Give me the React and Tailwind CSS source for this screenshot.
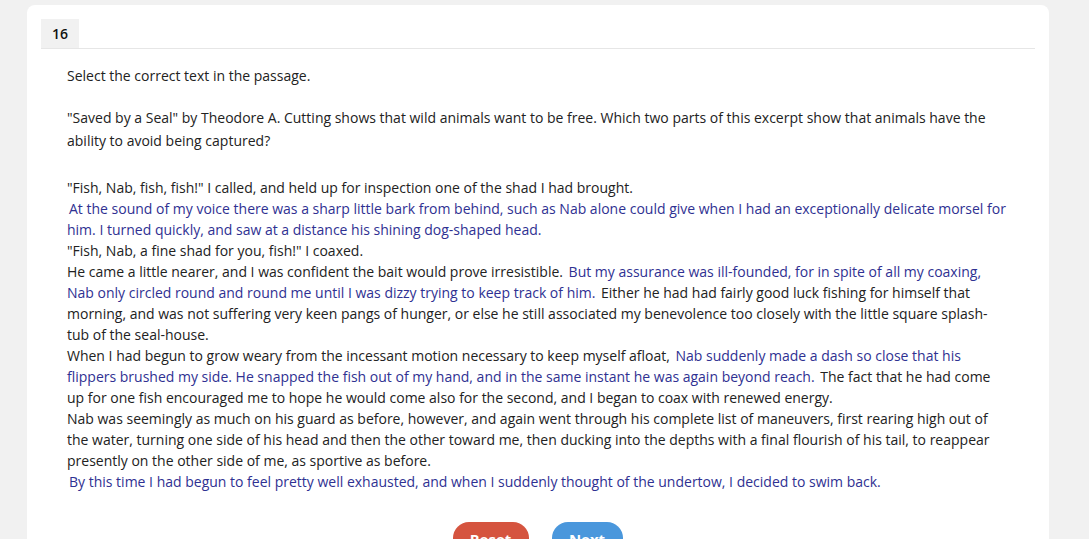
export default function App() {
  const blue = "px-[2px] text-[#2f3192]";
  return (
    <div className="min-h-[539px] bg-[#f1f1f1] pl-[27px] pr-[40px] pt-[5px] font-['Open_Sans',sans-serif] text-[14px] text-[#222]">
      <div className="w-[1022px] rounded-lg bg-white pt-[14px] pb-10">
        <div className="mx-[14px] flex border-b border-[#e6e6e6]">
          <div className="flex h-[29px] items-center bg-[#f1f1f1] px-[11px] font-semibold text-[#111]">16</div>
        </div>
        <div className="pl-[40px] pr-[41px]">
          <p className="mt-[16px] leading-[21px]">Select the correct text in the passage.</p>
          <p className="mt-[20px] leading-[23px]">
            "Saved by a Seal" by Theodore A. Cutting shows that wild animals want to be free. Which two parts of this excerpt show that animals have the ability to avoid being captured?
          </p>
          <div className="mt-[25px] leading-[21px]">
            "Fish, Nab, fish, fish!" I called, and held up for inspection one of the shad I had brought.
            <br />
            <span className={blue}>At the sound of my voice there was a sharp little bark from behind, such as Nab alone could give when I had an exceptionally delicate morsel for him. I turned quickly, and saw at a distance his shining dog-shaped head.</span>
            <br />
            "Fish, Nab, a fine shad for you, fish!" I coaxed.
            <br />
            He came a little nearer, and I was confident the bait would prove irresistible.{" "}
            <span className={blue}>But my assurance was ill-founded, for in spite of all my coaxing, Nab only circled round and round me until I was dizzy trying to keep track of him.</span>{" "}
            Either he had had fairly good luck fishing for himself that morning, and was not suffering very keen pangs of hunger, or else he still associated my benevolence too closely with the little square splash-tub of the seal-house.
            <br />
            When I had begun to grow weary from the incessant motion necessary to keep myself afloat,{" "}
            <span className={blue}>Nab suddenly made a dash so close that his flippers brushed my side. He snapped the fish out of my hand, and in the same instant he was again beyond reach.</span>{" "}
            The fact that he had come up for one fish encouraged me to hope he would come also for the second, and I began to coax with renewed energy.
            <br />
            Nab was seemingly as much on his guard as before, however, and again went through his complete list of maneuvers, first rearing high out of the water, turning one side of his head and then the other toward me, then ducking into the depths with a final flourish of his tail, to reappear presently on the other side of me, as sportive as before.
            <br />
            <span className={blue}>By this time I had begun to feel pretty well exhausted, and when I suddenly thought of the undertow, I decided to swim back.</span>
          </div>
          <div className="mt-[30px] flex justify-center gap-[23px]">
            <button className="h-[34px] w-[76px] rounded-[16px] bg-[#d5543f] text-[15px] font-bold text-white">Reset</button>
            <button className="h-[34px] w-[71px] rounded-[16px] bg-[#4a97dc] text-[15px] font-bold text-white">Next</button>
          </div>
        </div>
      </div>
    </div>
  );
}
